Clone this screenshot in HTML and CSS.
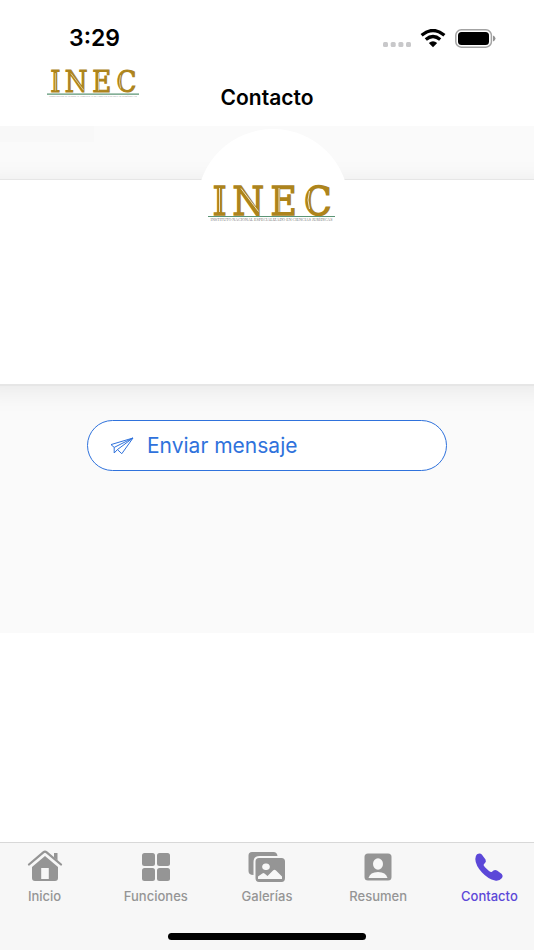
FILE: index.html
```html
<!DOCTYPE html>
<html lang="es">
<head>
<meta charset="utf-8">
<meta name="viewport" content="width=device-width, initial-scale=1">
<title>Contacto</title>
<link rel="stylesheet" href="styles.css">
</head>
<body>
<div class="app">
  <header>
    <div class="status">
      <span class="time">3:29</span>
      <div class="indicators">
        <svg width="28" height="5" viewBox="0 0 28 5" fill="#c8c8ca"><rect width="5" height="5" rx="1.5"/><rect x="7.7" width="5" height="5" rx="1.5"/><rect x="15.4" width="5" height="5" rx="1.5"/><rect x="23" width="5" height="5" rx="1.5"/></svg>
        <svg class="wifi" width="26" height="19" viewBox="0 0 26 19" fill="none" stroke="#000" stroke-width="3.3"><path d="M1.6 6.2Q13-3.2 24.400 6.200M5.800 10.500Q13 4.500 20.200 10.500"/><path d="M8.800 14Q13 10.500 17.200 14L13 18.200Z" fill="#000" stroke="none"/></svg>
        <svg width="41" height="19" viewBox="0 0 41 19"><rect x=".8" y=".8" width="35.6" height="17.4" rx="5.5" fill="none" stroke="#a3a3a3" stroke-width="1.5"/><rect x="3" y="3" width="31" height="13" rx="3.5"/><path d="M38 6.5Q40.5 7.5 40.5 9.5T38 12.5Z" fill="#929292"/></svg>
      </div>
    </div>
    <div class="titlebar">
      <svg class="logo-small" viewBox="0 0 254 76">
        <g class="logo-letters"><text x="9" y="61">I</text><text x="49" y="61">N</text><text x="125" y="61">E</text><text x="192" y="61">C</text></g>
        <path d="M23 8V56M66 9L101 55M142 8V56M203 14Q197 32 203 50" fill="none" stroke="#fff" stroke-width="1.5"/>
        <path d="M0 66H254" stroke="#5b9475" stroke-width="3"/>
        <text class="logo-caption" x="127" y="75">INSTITUTO NACIONAL ESPECIALIZADO EN CIENCIAS JURÍDICAS</text>
      </svg>
      <h1>Contacto</h1>
    </div>
  </header>
  <main>
    <div class="tint"></div>
    <section class="card">
      <div class="badge">
        <svg class="logo-large" viewBox="0 0 254 76">
          <g class="logo-letters"><text x="9" y="61">I</text><text x="49" y="61">N</text><text x="125" y="61">E</text><text x="192" y="61">C</text></g>
          <path d="M23 8V56M66 9L101 55M142 8V56M203 14Q197 32 203 50" fill="none" stroke="#fff" stroke-width="1.5"/>
          <path d="M0 65H254" stroke="#5b9475" stroke-width="2"/>
          <text class="logo-caption" x="127" y="74">INSTITUTO NACIONAL ESPECIALIZADO EN CIENCIAS JURÍDICAS</text>
        </svg>
      </div>
    </section>
    <button class="send" type="button">
      <svg width="24" height="18" viewBox="0 0 24 18" fill="none" stroke="#2f72dc" stroke-linejoin="round"><path d="M23 1L1 7.6L4.2 10.4L23 1L11.8 16.7L7.4 12.6L23 1M4.2 10.4V16L7.4 12.6"/></svg>
      <span>Enviar mensaje</span>
    </button>
  </main>
  <footer>
    <nav>
      <a href="#inicio">
        <svg width="36" height="34" viewBox="0 0 36 34"><path d="M2 15.5L16.3 3.3Q18 2 19.7 3.3L34 15.5" fill="none" stroke="#959595" stroke-width="2.3" stroke-linecap="round"/><path d="M27 4H30.5V11.5L27 8.5Z"/><path fill-rule="evenodd" d="M18 7L31 18V29Q31 32 28 32H8Q5 32 5 29V18ZM14.2 19V30H21.8V19Z"/></svg>
        <span>Inicio</span>
      </a>
      <a href="#funciones">
        <svg width="36" height="34" viewBox="0 0 36 34"><rect x="4" y="4" width="13" height="13" rx="2.5"/><rect x="19" y="4" width="13" height="13" rx="2.5"/><rect x="4" y="19" width="13" height="13" rx="2.5"/><rect x="19" y="19" width="13" height="13" rx="2.5"/></svg>
        <span>Funciones</span>
      </a>
      <a href="#galerias">
        <svg width="38" height="34" viewBox="0 0 38 34"><path d="M4 3H25.500Q29 3 29.500 7H11.500Q5.500 7 5.500 13V26Q.5 26 .5 22V6.500Q.5 3 4 3Z"/><path fill-rule="evenodd" d="M11 9H33.500Q37 9 37 12.500V29Q37 33 33.500 33H11Q7.500 33 7.500 29V12.500Q7.500 9 11 9ZM18 14.500A3.300 3.300 0 1 0 18 21A3.300 3.300 0 1 0 18 14.500ZM10 27.500V30H34V27.500L28 21.500Q26.500 20 25 21.500L19.500 27L16.500 24.500Q15.500 23.500 14.300 24.500Z"/></svg>
        <span>Galerías</span>
      </a>
      <a href="#resumen">
        <svg width="36" height="34" viewBox="0 0 36 34"><rect x="4.500" y="4.500" width="27" height="27" rx="3.500"/><g fill="#f7f7f7"><ellipse cx="18" cy="15" rx="5" ry="5.800"/><path d="M8.500 29Q10 23 18 23T27.500 29Z"/></g></svg>
        <span>Resumen</span>
      </a>
      <a class="active" href="#contacto" aria-current="page">
        <svg width="36" height="34" viewBox="0 0 36 34"><path d="M6 5.300Q9 3.500 10.800 5.500L14.500 10.500Q15.500 12.500 14 14L12.800 15.200Q12 16 14 18.300L18 22Q20 23.700 21 22.800L22.500 21.500Q24 20.300 26 21.500L30.800 25Q32.500 27 31 29Q28 32.500 24 31.600Q17 30 11 23.500Q4.500 16.500 4.300 10Q4.300 7 6 5.300Z"/></svg>
        <span>Contacto</span>
      </a>
    </nav>
    <div class="home-bar"></div>
  </footer>
</div>
</body>
</html>
```
FILE: styles.css
```css
* { box-sizing: border-box; }
body {
  margin: 0;
  background: #fff;
  color: #000;
  font-family: Inter, "Liberation Sans", sans-serif;
}
.logo-small, .logo-large { overflow: visible; }
.logo-letters {
  font-family: "DejaVu Serif Condensed", "DejaVu Serif", serif;
  font-size: 80px;
  fill: #ad841c;
  stroke: #ad841c;
  stroke-width: 3px;
}
.logo-caption {
  font-family: "Liberation Serif", serif;
  font-size: 8px;
  text-anchor: middle;
  fill: #777;
}
.app {
  display: flex;
  flex-direction: column;
  min-height: 100vh;
  overflow: hidden;
}
.status {
  display: flex;
  justify-content: space-between;
  align-items: center;
  height: 68px;
  padding: 8px 38px 0 69px;
}
.time { font-size: 23px; font-weight: 600; }
.indicators { display: flex; align-items: center; gap: 9px; }
.indicators svg:first-child { margin-top: 12px; }
.titlebar {
  display: grid;
  grid-template-columns: 1fr auto 1fr;
  height: 58px;
}
.logo-small { width: 92px; height: 28px; margin: 2px 0 0 47px; }
h1 {
  grid-column: 2;
  margin: 16px 0 0;
  font-size: 21px;
  line-height: 28px;
  font-weight: 600;
}
main {
  display: flex;
  flex-direction: column;
  align-items: center;
  padding-bottom: 162px;
  background: #fafafa;
}
.tint {
  align-self: flex-start;
  width: 94px;
  height: 16px;
  background: #f8f8f8;
}
.card {
  position: relative;
  align-self: stretch;
  height: 207px;
  margin: 37px -24px 0;
  border: solid #e6e6e6;
  border-width: 1px 0 2px;
  background: #fff;
  box-shadow: 0 4px 24px rgba(0, 0, 0, .08);
}
.badge {
  position: absolute;
  top: -51px;
  left: calc(50% + 6px);
  display: flex;
  justify-content: center;
  width: 152px;
  height: 152px;
  padding: 55px 4px 0 0;
  border-radius: 50%;
  background: #fff;
  transform: translateX(-50%);
}
.logo-large { width: 127px; height: 38px; }
.send {
  display: flex;
  align-items: center;
  gap: 13px;
  width: calc(100% - 174px);
  height: 51px;
  margin-top: 34px;
  padding: 0 22px;
  border: 1px solid #2f72dc;
  border-radius: 26px;
  background: #fff;
  color: #2f72dc;
  font-family: inherit;
  font-size: 21px;
}
footer {
  margin-top: auto;
  height: 108px;
  border-top: 1px solid #d8d8d8;
  background: #f7f7f7;
}
nav {
  display: grid;
  grid-template-columns: repeat(5, 1fr);
  margin: 0 -11px;
  padding-top: 6px;
}
nav a {
  display: flex;
  flex-direction: column;
  align-items: center;
  gap: 5px;
  color: #959595;
  fill: currentColor;
  font-size: 13px;
  line-height: 16px;
  font-weight: 500;
  text-decoration: none;
}
nav .active { color: #5c48d8; }
.home-bar {
  width: 198px;
  height: 7px;
  margin: 29px auto 0;
  border-radius: 4px;
  background: #000;
}
```
